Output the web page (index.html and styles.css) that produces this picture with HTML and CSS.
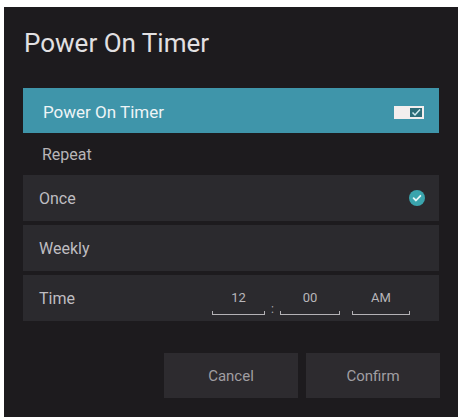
FILE: index.html
```html
<!DOCTYPE html>
<html>
<head>
<meta charset="utf-8">
<link rel="stylesheet" href="styles.css">
</head>
<body>
<div class="panel">
  <h1 class="title">Power On Timer</h1>
  <div class="row highlight">
    <span class="label">Power On Timer</span>
    <svg class="toggle" width="30" height="13" viewBox="0 0 30 13">
      <rect x="0" y="0" width="30" height="13" fill="#f3eeee"/>
      <rect x="16" y="2" width="12" height="9" fill="#2e6d78"/>
      <path d="M18.5 6.5 L21 9 L26 3.5" stroke="#cfe9ee" stroke-width="1.5" fill="none"/>
    </svg>
  </div>
  <div class="section">Repeat</div>
  <div class="list">
    <div class="row item">
      <span class="label">Once</span>
      <svg class="check" width="16" height="16" viewBox="0 0 16 16">
        <circle cx="8" cy="8" r="8" fill="#3aa4ad"/>
        <path d="M4.6 8.2 L7 10.5 L11.4 5.8" stroke="#e6f6f7" stroke-width="1.8" fill="none" stroke-linecap="round" stroke-linejoin="round"/>
      </svg>
    </div>
    <div class="row item">
      <span class="label">Weekly</span>
    </div>
    <div class="row item">
      <span class="label">Time</span>
      <div class="time">
        <div class="field f1"><span class="val">12</span><span class="line"></span></div>
        <span class="colon">:</span>
        <div class="field f2"><span class="val">00</span><span class="line"></span></div>
        <div class="field f3"><span class="val">AM</span><span class="line"></span></div>
      </div>
    </div>
  </div>
  <div class="buttons">
    <div class="btn">Cancel</div>
    <div class="btn">Confirm</div>
  </div>
</div>
</body>
</html>
```

FILE: styles.css
```css
html, body {
  margin: 0;
  padding: 0;
  background: #ffffff;
}
body {
  width: 462px;
  height: 417px;
  overflow: hidden;
  font-family: Roboto, "Liberation Sans", sans-serif;
}
.panel {
  margin: 7px 0 0 4px;
  width: 454px;
  height: 410px;
  background: #1d1b1e;
  padding: 20px 0 0 0;
  box-sizing: border-box;
  display: flex;
  flex-direction: column;
}
.title {
  margin: 0 0 0 20px;
  font-size: 26px;
  line-height: 32px;
  font-weight: 400;
  color: #e2e0e2;
}
.row {
  margin: 0 19px;
  display: flex;
  align-items: center;
  box-sizing: border-box;
}
.highlight {
  margin-top: 29px;
  height: 45px;
  background: #3f95aa;
  padding: 3px 15px 0 20px;
}
.highlight .label {
  color: #eef4f6;
  font-size: 17px;
}
.toggle {
  margin-left: auto;
  display: block;
}
.section {
  height: 42px;
  padding: 0 0 0 38px;
  display: flex;
  align-items: center;
  font-size: 16px;
  color: #b8b5b8;
}
.list {
  display: flex;
  flex-direction: column;
  gap: 4px;
}
.item {
  height: 46px;
  background: #2b2a2e;
  padding: 0 14px 0 16px;
}
.item .label {
  font-size: 16px;
  color: #bfbdc1;
}
.check {
  margin-left: auto;
  display: block;
}
.time {
  margin-left: auto;
  margin-right: 15px;
  display: flex;
  align-items: flex-end;
  padding-top: 8px;
}
.field {
  display: flex;
  flex-direction: column;
  align-items: center;
}
.f1 { width: 53px; }
.f2 { width: 60px; margin-right: 12px; }
.f3 { width: 58px; }
.val {
  font-size: 13px;
  line-height: 15px;
  color: #b8b6ba;
  margin-bottom: 6px;
}
.line {
  display: block;
  width: 100%;
  height: 4px;
  box-sizing: border-box;
  border: 1.5px solid #b4b2b6;
  border-top: none;
}
.colon {
  font-size: 12px;
  color: #a9a7ab;
  width: 15px;
  text-align: center;
  line-height: 12px;
}
.buttons {
  margin-top: 32px;
  margin-right: 18px;
  display: flex;
  justify-content: flex-end;
  gap: 8px;
}
.btn {
  width: 134px;
  height: 45px;
  background: #2d2b2f;
  display: flex;
  align-items: center;
  justify-content: center;
  font-size: 15px;
  color: #a09ea2;
}
```
